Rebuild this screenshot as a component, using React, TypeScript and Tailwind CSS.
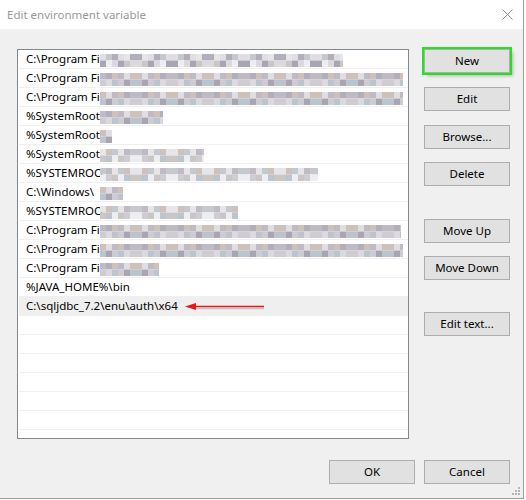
import React from "react"

type Row = { text: string; blur?: number; seed?: number }

// list entries, blur = absolute x where the pixelated part ends
const rows: Row[] = [
  { text: "C:\\Program Fi", blur: 342, seed: 3 },
  { text: "C:\\Program Fi", blur: 402, seed: 11 },
  { text: "C:\\Program Fi", blur: 402, seed: 17 },
  { text: "%SystemRoot", blur: 162, seed: 23 },
  { text: "%SystemRoot", blur: 111, seed: 29 },
  { text: "%SystemRoot", blur: 203, seed: 31 },
  { text: "%SYSTEMROO", blur: 317, seed: 37 },
  { text: "C:\\Windows\\", blur: 122, seed: 41 },
  { text: "%SYSTEMROO", blur: 237, seed: 43 },
  { text: "C:\\Program Fi", blur: 400, seed: 47 },
  { text: "C:\\Program Fi", blur: 402, seed: 53 },
  { text: "C:\\Program Fi", blur: 158, seed: 59 },
  { text: "%JAVA_HOME%\\bin" },
  { text: "C:\\sqljdbc_7.2\\enu\\auth\\x64" },
]

const palette = [
  "#cfcbd2", "#bfbac3", "#dcd9de", "#b2aebc", "#cbc6c6", "#e6e5ea",
  "#bcc4cd", "#cec0ba", "#aaa5b3", "#e0dee3", "#eeedf1", "#c5c9ce",
]

function Mosaic({ width, seed }: { width: number; seed: number }) {
  const cols = Math.ceil(width / 6)
  const cells: React.ReactNode[] = []
  for (let c = 0; c < cols; c++) {
    for (let r = 0; r < 2; r++) {
      const h = (seed * 131 + c * 37 + r * 71 + c * c * 13) % palette.length
      cells.push(
        <rect key={`${c}-${r}`} x={c * 6} y={4 + r * 6.5} width={6} height={6.5} fill={palette[h]} />
      )
    }
  }
  return (
    <svg width={width} height={19} className="block shrink-0">
      {cells}
    </svg>
  )
}

function Btn({ label, className = "" }: { label: string; className?: string }) {
  return (
    <button
      className={`w-[86px] h-[24px] bg-[#e1e1e1] border border-[#adadad] text-[11.5px] text-black leading-none ${className}`}
    >
      {label}
    </button>
  )
}

export default function App() {
  const empty = Array.from({ length: 8 })
  return (
    <div className="w-[526px] h-[500px] bg-white overflow-hidden" style={{ fontFamily: '"Noto Sans", "Liberation Sans", sans-serif' }}>
      <div className="relative w-[524px] h-[499px] border-r border-b border-[#9c9c9c] flex flex-col">
        {/* title bar */}
        <div className="h-[29px] bg-white flex items-center justify-between pl-[7px] pr-[10px] shrink-0">
          <span className="text-[11.5px] text-[#999999]">Edit environment variable</span>
          <svg width="11" height="11" viewBox="0 0 11 11" className="mt-[-1px]">
            <path d="M0.5 0.5L10.5 10.5M10.5 0.5L0.5 10.5" stroke="#8f8f8f" strokeWidth="1" />
          </svg>
        </div>

        <div className="flex-1 bg-[#f0f0f0] pl-[17px] pt-[20px] flex flex-col">
          <div className="flex">
            {/* list */}
            <div className="w-[392px] h-[390px] border border-[#828790] bg-white overflow-hidden pl-[1px]">
              {rows.map((r, i) => (
                <div
                  key={i}
                  className={`relative h-[19px] border-b border-[#f0f0f0] flex items-center text-[11.5px] text-black whitespace-nowrap ${i === 13 ? "bg-[#efefef]" : ""}`}
                >
                  {r.blur ? (
                    <>
                      <span className="w-[81px] pl-[7px] shrink-0 leading-[18px]">{r.text}</span>
                      <Mosaic width={r.blur - 99} seed={r.seed ?? 1} />
                    </>
                  ) : (
                    <span className="pl-[7px] leading-[18px]">{r.text}</span>
                  )}
                  {i === 13 && (
                    <svg width="84" height="12" className="absolute left-[165px] top-[4px]">
                      <path d="M12 7.5L80 7.5" stroke="#9a9a9a" strokeOpacity="0.5" strokeWidth="1.5" />
                      <path d="M10 5.5L80 5.5" stroke="#e11b1b" strokeWidth="1.5" />
                      <path d="M1 5.5L12 2L12 9Z" fill="#e11b1b" />
                    </svg>
                  )}
                </div>
              ))}
              {empty.map((_, i) => (
                <div key={`e${i}`} className="h-[19px] border-b border-[#f0f0f0]" />
              ))}
            </div>

            {/* buttons */}
            <div className="ml-[15px] flex flex-col">
              <Btn
                label="New"
                className="border-[#7a7a7a] shadow-[0_0_0_2px_#22e21c,3px_3px_3px_rgba(0,0,0,0.25)]"
              />
              <Btn label="Edit" className="mt-[14px]" />
              <Btn label="Browse..." className="mt-[14px]" />
              <Btn label="Delete" className="mt-[13px]" />
              <Btn label="Move Up" className="mt-[33px]" />
              <Btn label="Move Down" className="mt-[13px]" />
              <Btn label="Edit text..." className="mt-[32px]" />
            </div>
          </div>

          <div className="flex justify-end gap-[9px] mt-[21px] pr-[13px]">
            <Btn label="OK" className="h-[23px]" />
            <Btn label="Cancel" className="h-[23px]" />
          </div>
        </div>

        {/* size grip */}
        <svg width="9" height="9" className="absolute right-[2px] bottom-[2px]">
          <rect x="6" y="0" width="2" height="2" fill="#b4b4b4" />
          <rect x="3" y="3" width="2" height="2" fill="#b4b4b4" />
          <rect x="6" y="3" width="2" height="2" fill="#b4b4b4" />
          <rect x="0" y="6" width="2" height="2" fill="#b4b4b4" />
          <rect x="3" y="6" width="2" height="2" fill="#b4b4b4" />
          <rect x="6" y="6" width="2" height="2" fill="#b4b4b4" />
        </svg>
      </div>
    </div>
  )
}
